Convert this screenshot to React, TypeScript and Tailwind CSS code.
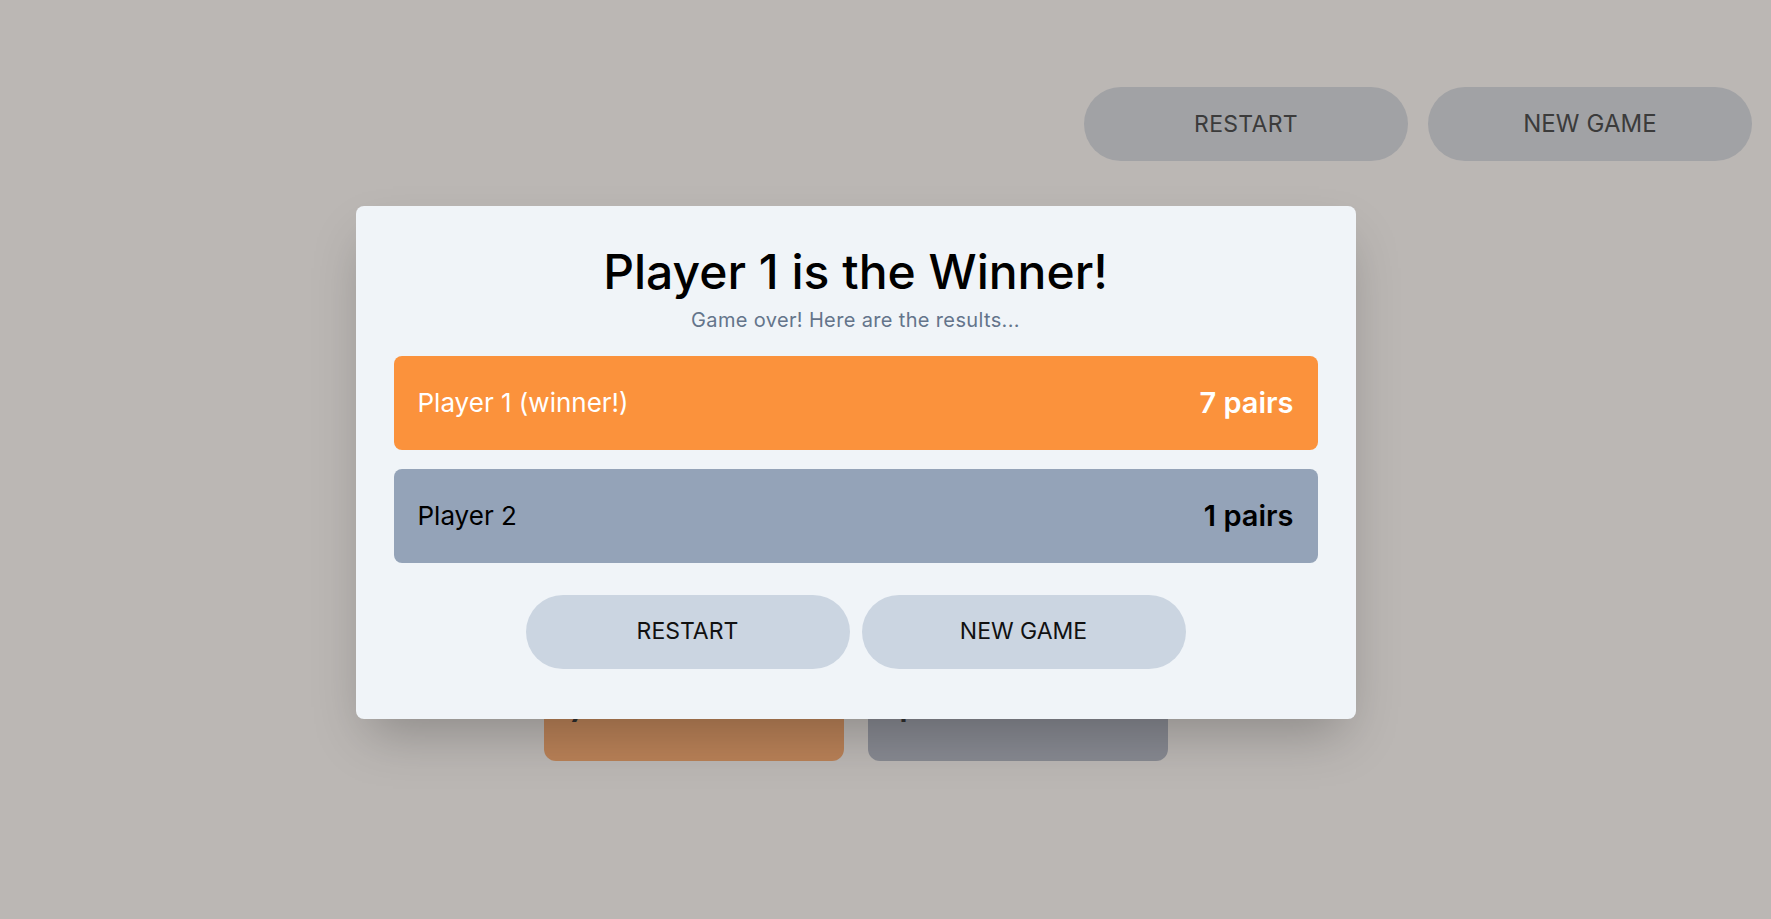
import React from "react";

const font = { fontFamily: "Inter, 'Noto Sans', sans-serif" };

const players = [
  { name: "Player 1", pairs: 7, winner: true },
  { name: "Player 2", pairs: 1, winner: false },
];

const App = () => {
  return (
    <div className="relative w-full h-screen overflow-hidden bg-[#bbb7b4] flex flex-col" style={font}>
      {/* page behind the dialog (already dimmed) */}
      <header className="flex justify-end gap-5 pt-[87px] pr-[19px]">
        <button className="w-[324px] h-[74px] rounded-full bg-[#a1a2a5] text-[23px] tracking-[0.3px] text-[#3b3b3b] uppercase">
          Restart
        </button>
        <button className="w-[324px] h-[74px] rounded-full bg-[#a1a2a5] text-[24px] tracking-[0.1px] text-[#3b3b3b] uppercase">
          New Game
        </button>
      </header>

      <div className="flex-1" />

      <div className="flex justify-center gap-6 pr-[60px] mb-[158px]">
        <div className="w-[300px] h-[140px] rounded-xl bg-[#b98157] px-6 pt-[31px] text-[#2e2e2e]">
          <p className="text-lg leading-7">Player 1</p>
          <p className="text-[44px] leading-[52px] font-normal">7</p>
        </div>
        <div className="w-[300px] h-[140px] rounded-xl bg-[#878991] px-6 pt-[31px] text-[#2e2e2e]">
          <p className="text-lg leading-7">Player 2</p>
          <p className="text-[44px] leading-[52px] font-normal">1</p>
        </div>
      </div>

      {/* results dialog */}
      <div className="absolute inset-0 flex items-center justify-center pr-[60px] pt-[5px]">
        <div className="w-[1000px] rounded-lg bg-[#f0f4f8] shadow-2xl px-[38px] pt-[42px] pb-[50px]">
          <h1 className="text-center text-5xl leading-[48px] font-medium text-black">
            Player 1 is the Winner!
          </h1>
          <p className="mt-2.5 text-center text-xl leading-7 tracking-[0.35px] text-[#64748b]">
            Game over! Here are the results...
          </p>

          <div className="mt-[22px] flex flex-col gap-[19px]">
            {players.map((p) => (
              <div
                key={p.name}
                className={
                  p.winner
                    ? "h-[94px] rounded-lg bg-[#fb923c] px-6 flex items-center justify-between text-white"
                    : "h-[94px] rounded-lg bg-[#94a3b8] px-6 flex items-center justify-between text-black"
                }
              >
                <span className="text-[26px]">{p.winner ? `${p.name} (winner!)` : p.name}</span>
                <span className="text-[29px] font-semibold">{p.pairs} pairs</span>
              </div>
            ))}
          </div>

          <div className="mt-[32px] flex justify-center gap-3">
            <button className="w-[324px] h-[74px] rounded-full bg-[#cbd5e1] text-[23px] text-[#111] uppercase">
              Restart
            </button>
            <button className="w-[324px] h-[74px] rounded-full bg-[#cbd5e1] text-[23px] text-[#111] uppercase">
              New Game
            </button>
          </div>
        </div>
      </div>
    </div>
  );
};

export default App;
